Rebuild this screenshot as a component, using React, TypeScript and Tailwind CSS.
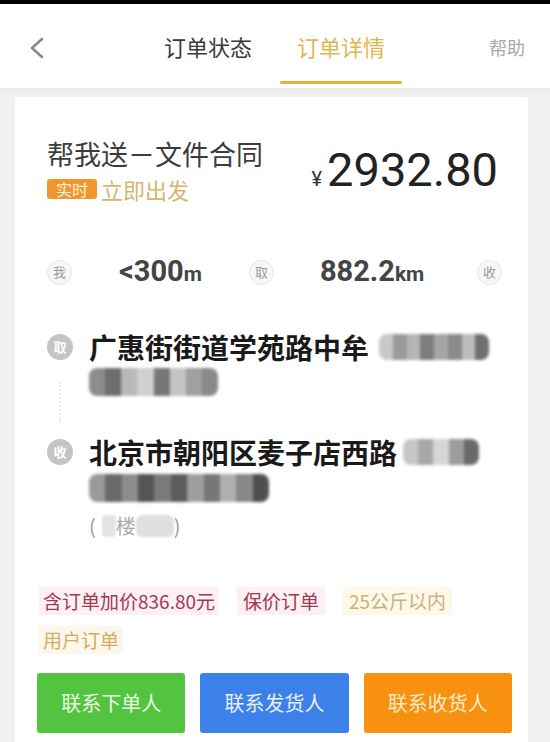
const cn = '"Noto Sans CJK SC", "Noto Sans", sans-serif';

function Mosaic({ cells, className }: { cells: string[]; className: string }) {
  return (
    <span className={`inline-flex overflow-hidden rounded-[8px] blur-[1.5px] ${className}`}>
      {cells.map((c, i) => (
        <span key={i} className={`h-full flex-1 ${c}`} />
      ))}
    </span>
  );
}

function Dot({ label, filled }: { label: string; filled?: boolean }) {
  return filled ? (
    <span className="flex h-[26px] w-[26px] shrink-0 items-center justify-center rounded-full bg-[#c4c4c4] text-[13px] font-bold text-white">
      {label}
    </span>
  ) : (
    <span className="flex h-[25px] w-[25px] shrink-0 items-center justify-center rounded-full border border-[#e6e6e6] bg-[#f7f7f7] text-[13px] text-[#9a9a9a]">
      {label}
    </span>
  );
}

export default function App() {
  return (
    <div
      className="flex h-[742px] w-[550px] flex-col overflow-hidden bg-[#f1f1f1]"
      style={{ fontFamily: cn }}
    >
      <div className="h-[4px] shrink-0 bg-black" />

      {/* header */}
      <header className="flex h-[84px] shrink-0 items-stretch bg-white shadow-[0_2px_4px_rgba(0,0,0,0.04)]">
        <div className="flex w-[164px] items-start pl-[28px] pt-[33px]">
          <svg width="18" height="22" viewBox="0 0 18 22" fill="none">
            <path d="M14 2 L4 11 L14 20" stroke="#8a8a8a" strokeWidth="2.6" strokeLinecap="round" strokeLinejoin="round" />
          </svg>
        </div>
        <div className="pt-[27px] text-[22px] leading-[30px] text-[#3a3a3a]">订单状态</div>
        <div className="ml-[28px] flex w-[122px] flex-col items-center">
          <div className="pt-[27px] text-[22px] leading-[30px] text-[#e2b64f]">订单详情</div>
          <div className="mb-[4px] mt-auto h-[3px] w-full rounded-full bg-[#e0b243]" />
        </div>
        <div className="ml-auto pr-[25px] pt-[30px] text-[18px] leading-[26px] text-[#a8a8a8]">帮助</div>
      </header>

      {/* card */}
      <main className="ml-[15px] mt-[9px] flex w-[513px] flex-1 flex-col rounded-t-[3px] bg-white px-[32px]">
        <section className="flex items-start justify-between pt-[40px]">
          <div>
            <div className="text-[27px] leading-[34px] text-[#3c3c3c]">帮我送－文件合同</div>
            <div className="mt-[5px] flex items-center gap-[4px]">
              <span className="rounded-[3px] bg-[#f0962c] px-[9px] text-[16px] leading-[20px] text-[#fff1dc]">实时</span>
              <span className="text-[22px] leading-[26px] text-[#d6b56c]">立即出发</span>
            </div>
          </div>
          <div className="mr-[-2px] mt-[6px] flex items-baseline" style={{ fontFamily: 'Roboto, "Liberation Sans", sans-serif' }}>
            <span className="mr-[5px] text-[20px] text-[#333]">¥</span>
            <span className="text-[47px] leading-[54px] text-[#222]">2932.80</span>
          </div>
        </section>

        <section className="mt-[53px] flex items-center" style={{ fontFamily: 'Roboto, "Noto Sans CJK SC", sans-serif' }}>
          <Dot label="我" />
          <span className="ml-[47px] text-[29px] font-bold leading-[32px] text-[#444]">
            &lt;300<span className="text-[21px]">m</span>
          </span>
          <span className="ml-[47px]"><Dot label="取" /></span>
          <span className="ml-[46px] text-[29px] font-bold leading-[32px] text-[#444]">
            882.2<span className="text-[21px]">km</span>
          </span>
          <span className="ml-auto mr-[-6px]"><Dot label="收" /></span>
        </section>

        <section className="mt-[40px] flex flex-col">
          <div className="flex items-start gap-[16px]">
            <div className="flex flex-col items-center pt-[4px]">
              <Dot label="取" filled />
              <div className="mt-[22px] h-[40px] border-l-2 border-dotted border-[#ececec]" />
            </div>
            <div className="flex flex-col">
              <div className="flex items-center text-[28px] font-bold leading-[34px] text-[#1a1a1a]">
                广惠街街道学苑路中牟
                <Mosaic className="ml-[10px] h-[26px] w-[110px]" cells={["bg-[#c8c8c8]", "bg-[#9a9a9a]", "bg-[#b5b5b5]", "bg-[#7d7d7d]", "bg-[#a5a5a5]", "bg-[#8a8a8a]", "bg-[#bdbdbd]", "bg-[#6f6f6f]"]} />
              </div>
              <Mosaic className="mt-[4px] h-[28px] w-[129px]" cells={["bg-[#8c8c8c]", "bg-[#6e6e6e]", "bg-[#b8b8b8]", "bg-[#d0d0d0]", "bg-[#777]", "bg-[#c4c4c4]", "bg-[#a0a0a0]", "bg-[#8a8a8a]"]} />
            </div>
          </div>

          <div className="mt-[13px] flex items-start gap-[16px]">
            <div className="pt-[4px]">
              <Dot label="收" filled />
            </div>
            <div className="flex flex-col">
              <div className="flex items-center text-[28px] font-bold leading-[34px] text-[#1a1a1a]">
                北京市朝阳区麦子店西路
                <Mosaic className="ml-[6px] h-[26px] w-[76px]" cells={["bg-[#c6c6c6]", "bg-[#a8a8a8]", "bg-[#d6d6d6]", "bg-[#9c9c9c]", "bg-[#6a6a6a]"]} />
              </div>
              <Mosaic className="mt-[5px] h-[28px] w-[180px]" cells={["bg-[#9a9a9a]", "bg-[#6a6a6a]", "bg-[#8c8c8c]", "bg-[#555]", "bg-[#7a7a7a]", "bg-[#5c5c5c]", "bg-[#9e9e9e]", "bg-[#777]", "bg-[#b0b0b0]", "bg-[#888]", "bg-[#4f4f4f]"]} />
              <div className="mt-[11px] flex items-center text-[20px] leading-[26px] text-[#999]">
                (<span className="ml-[6px] h-[22px] w-[14px] rounded-[4px] bg-[#e4e4e4] blur-[1px]" />
                <span className="text-[#aaa]">楼</span>
                <span className="h-[22px] w-[38px] rounded-[6px] bg-[#e0e0e0] blur-[1px]" />)
              </div>
            </div>
          </div>
        </section>

        <section className="ml-[-8px] mt-[48px] flex flex-wrap gap-x-[18px] gap-y-[11px] text-[19px] leading-[28px]">
          <span className="bg-[#fdf0f2] px-[4px] text-[#a23a55]">含订单加价836.80元</span>
          <span className="bg-[#fdf0f2] px-[6px] text-[#a23a55]">保价订单</span>
          <span className="bg-[#fdf8e8] px-[6px] text-[#cdb07a]">25公斤以内</span>
          <span className="bg-[#fdf6ec] px-[4px] text-[#d4ad5c]">用户订单</span>
        </section>

        <section className="ml-[-10px] mr-[-16px] mt-[19px] flex gap-[15px] text-[20px]">
          <button className="h-[60px] flex-1 rounded-[3px] bg-[#53c43f] text-[#eafbe6]">联系下单人</button>
          <button className="h-[60px] flex-1 rounded-[3px] bg-[#3c80ea] text-[#e8f0ff]">联系发货人</button>
          <button className="h-[60px] flex-1 rounded-[3px] bg-[#f7910f] text-[#fde9c8]">联系收货人</button>
        </section>
      </main>
    </div>
  );
}
